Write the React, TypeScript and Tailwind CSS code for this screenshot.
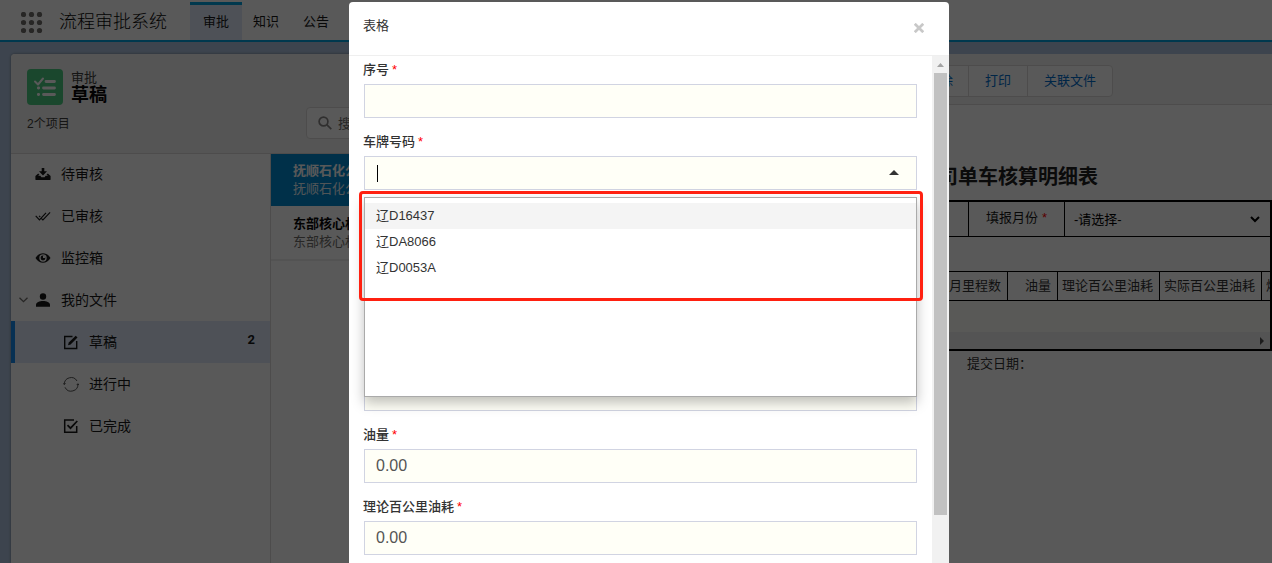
import React from "react";

const DotsIcon = () => (
  <svg width="22" height="22" viewBox="0 0 22 22" fill="#706e6b">
    {[3, 11, 19].map((y) => [3, 11, 19].map((x) => <circle key={`${x}-${y}`} cx={x - 0.5} cy={y - 0.5} r="2.6" />))}
  </svg>
);

const ListCheckIcon = () => (
  <svg width="36" height="36" viewBox="0 0 36 36" fill="none" stroke="#fff" strokeLinecap="round" strokeLinejoin="round">
    <path d="M8 12.5l3 3 5-6" strokeWidth="2" />
    <path d="M19 12.5h8.500M16.500 19h11M16.500 25.500h11" strokeWidth="2.800" />
    <path d="M11.300 19h.4M11.300 25.500h.4" strokeWidth="2.800" />
  </svg>
);

const DownloadIcon = () => (
  <svg width="16" height="16" viewBox="0 0 16 16" fill="#181818">
    <path d="M6.700 2h2.600v3.200h2.700L8 9.400 4 5.200h2.700z" />
    <path d="M3.200 7.500L4.500 8.700 2.900 9.700h2.500l1 1.600h3.200l1-1.600h2.500l-1.600-1 1.300-1.200L15.600 10v3.200q0 .9-.9.9H1.300q-.9 0-.9-.9V10z" />
  </svg>
);

const DoubleCheckIcon = () => (
  <svg width="18" height="16" viewBox="0 0 18 16" fill="none" stroke="#181818" strokeWidth="1.300">
    <path d="M.8 7.800l4.200 4.700 7.400-8" />
    <path d="M7 10.600l1.900 1.900L17 4" />
    <path d="M4.600 7.800l1.300 1.300" />
  </svg>
);

const EyeIcon = () => (
  <svg width="16" height="16" viewBox="0 0 16 16">
    <path d="M.5 8C2.300 4.900 5 3.300 8 3.300S13.700 4.900 15.500 8C13.700 11.100 11 12.700 8 12.700S2.300 11.100.5 8z" fill="#181818" />
    <circle cx="8" cy="8" r="3.700" fill="#fff" />
    <circle cx="8" cy="8" r="2.400" fill="#181818" />
    <path d="M8 8V5.600A2.400 2.400 0 0 1 10.400 8z" fill="#fff" />
  </svg>
);

const UserIcon = () => (
  <svg width="16" height="16" viewBox="0 0 16 16" fill="#181818">
    <circle cx="8" cy="4.500" r="3.200" />
    <path d="M1 14.800v-2.200C1 10.600 4.600 9 8 9s7 1.600 7 3.600v2.200z" />
  </svg>
);

const EditIcon = () => (
  <svg width="16" height="16" viewBox="0 0 16 16" fill="none" stroke="#181818">
    <path d="M9.500 2.500H1.700v12h12V7" strokeWidth="1.400" />
    <path d="M5 11.200l.8-2.600L12.700 1.700l1.800 1.800L7.600 10.400z" fill="#181818" stroke="none" />
  </svg>
);

const ProgressIcon = () => (
  <svg width="16" height="16" viewBox="0 0 16 16" fill="none" stroke="#444" strokeWidth=".9">
    <path d="M1.300 8.500A6.800 6.800 0 0 1 14 5" />
    <path d="M14.900 7.800A6.800 6.800 0 0 1 2 11.300" />
    <path d="M.2 7.300l1.100 1.200 1.200-1.200M13.700 9l1.200-1.200L16 9" />
  </svg>
);

const DoneIcon = () => (
  <svg width="16" height="16" viewBox="0 0 16 16" fill="none" stroke="#181818">
    <path d="M11 1.900H1.700v12.300h12V8" strokeWidth="1.500" />
    <path d="M4.500 7.200l3 3 6.800-7.200" strokeWidth="1.700" />
  </svg>
);

const NavItem = ({ icon, label, arrow }: { icon: React.ReactNode; label: string; arrow?: boolean }) => (
  <div className="flex h-[42px] items-center text-sm text-[#181818]">
    <div className="flex w-6 shrink-0 justify-center">
      {arrow && (
        <svg width="9" height="6" viewBox="0 0 9 6" fill="none" stroke="#706e6b" strokeWidth="1.300">
          <path d="M.5 .7l4 4 4-4" />
        </svg>
      )}
    </div>
    <div className="mr-[10px] flex w-4 shrink-0 justify-center">{icon}</div>
    {label}
  </div>
);

const SubItem = ({ icon, label, count }: { icon: React.ReactNode; label: string; count?: string }) => (
  <div
    className={
      count
        ? "flex h-[42px] items-center border-l-4 border-[#1589ee] bg-[#dee8f8] pl-12 text-sm text-[#181818]"
        : "flex h-[42px] items-center border-l-4 border-transparent pl-12 text-sm text-[#181818]"
    }
  >
    <div className="mr-[10px] w-4 shrink-0">{icon}</div>
    <span className="grow">{label}</span>
    {count && <span className="mr-[15px] pb-1 font-[Roboto,sans-serif] text-[13px] font-bold">{count}</span>}
  </div>
);

const Label = ({ text }: { text: string }) => (
  <div className="-ml-px flex h-[26px] items-center pb-[3px] text-[13px] font-medium text-[#333]">
    {text}
    <span className="ml-[3px] font-normal text-[#ff0000]">*</span>
  </div>
);

const Field = ({ label, value }: { label: string; value?: string }) => (
  <div className="mb-[12px]">
    <Label text={label} />
    <div className="flex h-[34px] items-center border border-[#d1d4e2] bg-[#fffff7] pl-[11px] text-base text-[#555]">
      {value}
    </div>
  </div>
);

const plates = ["辽D16437", "辽DA8066", "辽D0053A"];

function Header() {
  return (
    <div className="flex h-[42px] shrink-0 border-b-2 border-[#00a1e0] bg-white text-[13px] text-[#181818]">
      <div className="ml-[21px] mt-[12px] h-[22px] w-[22px]">
        <DotsIcon />
      </div>
      <div className="ml-4 flex w-[131px] items-center pt-[3px] text-lg font-light text-[#080707]">流程审批系统</div>
      <div className="mt-[2px] flex w-[52px] items-center justify-center border-t-[3px] border-[#00a1e0] bg-[#dee8f8] pb-px">审批</div>
      <div className="flex w-12 items-center justify-center pt-[3px]">知识</div>
      <div className="flex w-[52px] items-center justify-center pt-[3px]">公告</div>
    </div>
  );
}

function LeftCard() {
  return (
    <div className="flex w-[500px] shrink-0 flex-col rounded-tl bg-white shadow-[0_0_3px_rgba(0,0,0,0.4)]">
      <div className="h-[100px] shrink-0 rounded-tl border-b border-[#dddbda] bg-[#f3f2f2] pl-4 pt-[15px]">
        <div className="flex">
          <div className="h-9 w-9 rounded bg-[#4bca81]">
            <ListCheckIcon />
          </div>
          <div className="ml-2">
            <div className="h-4 text-[13px] leading-[17px] text-[#3e3e3c]">审批</div>
            <div className="text-lg font-bold leading-[21px] text-[#080707]">草稿</div>
          </div>
        </div>
        <div className="flex">
          <div className="mt-[7px] w-[279px] text-xs leading-[22px] text-[#3e3e3c]">2个项目</div>
          <div className="mt-px flex h-8 w-[180px] items-center rounded border border-[#dddbda] bg-white pl-[11px] text-[13px] text-[#706e6b]">
            <svg width="14" height="14" viewBox="0 0 14 14" fill="none" stroke="#8a8886" strokeWidth="1.700">
              <circle cx="5.500" cy="5.500" r="4.400" />
              <path d="M8.700 8.700l4.600 4.400" />
            </svg>
            <span className="ml-[6px] pt-px">搜索此列表</span>
          </div>
        </div>
      </div>
      <div className="flex grow">
        <div className="-mt-px w-[260px] shrink-0 border-r border-[#dddbda]">
          <NavItem icon={<DownloadIcon />} label="待审核" />
          <NavItem icon={<DoubleCheckIcon />} label="已审核" />
          <NavItem icon={<EyeIcon />} label="监控箱" />
          <NavItem icon={<UserIcon />} label="我的文件" arrow />
          <SubItem icon={<EditIcon />} label="草稿" count="2" />
          <SubItem icon={<ProgressIcon />} label="进行中" />
          <SubItem icon={<DoneIcon />} label="已完成" />
        </div>
        <div className="grow text-[13px] leading-[18px]">
          <div className="h-[52px] bg-[#008ad2] pl-[22px] pt-[8px] text-white">
            <div className="font-bold">抚顺石化公司</div>
            <div className="opacity-90">抚顺石化公司</div>
          </div>
          <div className="h-[55px] border-b-2 border-[#eeeeee] pl-[22px] pt-[9px]">
            <div className="font-bold text-[#080707]">东部核心机房</div>
            <div className="text-[#706e6b]">东部核心机房</div>
          </div>
        </div>
      </div>
    </div>
  );
}

function RightCard() {
  return (
    <div className="flex grow flex-col overflow-hidden bg-white text-[13px] text-[#181818]">
      <div className="flex h-[51px] shrink-0 justify-end border-b border-[#dddbda] bg-[#f3f2f2] pr-[159px] pt-[11px]">
        <div className="flex h-8 rounded border border-[#dddbda] bg-white leading-[29px] text-[#006dcc]">
          <div className="border-r border-[#dddbda] px-[15px]">删除</div>
          <div className="w-[59px] border-r border-[#dddbda] text-center">打印</div>
          <div className="w-[84px] text-center">关联文件</div>
        </div>
      </div>
      <div className="flex h-[95px] shrink-0 items-end justify-end pb-[7px] pr-[174px] text-xl font-bold leading-[32px] text-[#222]">
        公司单车核算明细表
      </div>
      <div className="flex h-[151px] shrink-0 flex-col border-2 border-black">
        <div className="flex h-[35px] shrink-0 justify-end border-b border-black">
          <div className="flex w-[97px] shrink-0 items-center border-x border-black pb-[2px] pl-[17px]">
            填报月份<span className="ml-1 text-[#ff0000]">*</span>
          </div>
          <div className="flex w-[205px] shrink-0 items-center pl-[9px] text-black">
            <span className="grow pt-px">-请选择-</span>
            <svg className="mr-[10px]" width="10" height="7" viewBox="0 0 10 7" fill="none" stroke="#000" strokeWidth="2">
              <path d="M1 1l4 4 4-4" />
            </svg>
          </div>
        </div>
        <div className="h-[34px] shrink-0" />
        <div className="flex h-[30px] shrink-0 justify-end border-y border-black leading-[27px] text-[#333]">
          <div className="whitespace-nowrap border-r border-black pr-[6px]">月里程数</div>
          <div className="w-[50px] shrink-0 border-r border-black pr-[6px] text-right">油量</div>
          <div className="w-[102px] shrink-0 border-r border-black pl-[4px]">理论百公里油耗</div>
          <div className="w-[102px] shrink-0 border-r border-black pl-[4px]">实际百公里油耗</div>
          <div className="w-[8px] shrink-0 overflow-hidden pl-[4px]">燃</div>
        </div>
        <div className="h-[31px] shrink-0 bg-[#fffffa]" />
        <div className="flex grow items-center justify-end bg-[#f1f1f1] pr-[6px]">
          <svg width="4" height="8" viewBox="0 0 4 8" fill="#505050">
            <path d="M0 0l4 4-4 4z" />
          </svg>
        </div>
      </div>
      <div className="flex justify-end pr-[242px] pt-[3px] leading-5 text-[#333]">
        <span className="w-[63px] whitespace-nowrap">提交日期：</span>
      </div>
    </div>
  );
}

function Modal() {
  return (
    <div className="mt-[2px] flex h-[600px] w-[600px] flex-col rounded bg-white">
      <div className="flex h-[54px] shrink-0 items-center justify-between border-b border-[#efefef] pl-[14px] pr-[25px] text-[13px] text-[#333]">
        <span className="pb-[6px]">表格</span>
        <svg className="-mt-[2px]" width="10" height="10" viewBox="0 0 10 10" stroke="#c8c8c8" strokeWidth="2.700" fill="none">
          <path d="M.8 .8l8.400 8.400M9.200 .8L.8 9.200" />
        </svg>
      </div>
      <div className="flex min-h-0 grow overflow-hidden">
        <div className="grow px-[15px] pt-[2px]">
          <Field label="序号" />
          <div className="relative mb-[187px]">
            <Label text="车牌号码" />
            <div className="flex h-[34px] items-center justify-between border border-[#d1d4e2] bg-[#fffff7] pl-3 pr-[17px]">
              <div className="h-[17px] w-px bg-black" />
              <svg className="-translate-y-px" width="10" height="5" viewBox="0 0 10 5" fill="#333">
                <path d="M0 5l5-5 5 5z" />
              </svg>
            </div>
            <div className="absolute left-0 top-[67px] z-10 h-[200px] w-full border border-[#aaa] bg-white pt-[5px] text-[13px] leading-[26px] text-[#333] shadow-[0_6px_12px_rgba(0,0,0,0.25)]">
              {plates.map((p, i) => (
                <div key={p} className={i === 0 ? "h-[26px] bg-[#f4f4f4] pl-[11px]" : "h-[26px] pl-[11px]"}>
                  {p}
                </div>
              ))}
            </div>
            <div className="absolute -left-[5px] top-[61px] z-20 h-[110px] w-[564px] rounded border-[3px] border-[#ff2010]" />
          </div>
          <div className="mb-[12px] h-[34px] border border-[#d1d4e2] bg-[#fffff7]" />
          <Field label="油量" value="0.00" />
          <Field label="理论百公里油耗" value="0.00" />
        </div>
        <div className="flex w-[17px] shrink-0 flex-col items-center bg-[#f1f1f1]">
          <svg className="mt-[7px] mb-[6px]" width="7" height="4" viewBox="0 0 7 4" fill="#a3a3a3">
            <path d="M0 4l3.500-4L7 4z" />
          </svg>
          <div className="h-[442px] w-[13px] shrink-0 bg-[#c1c1c1]" />
        </div>
      </div>
    </div>
  );
}

export default function App() {
  return (
    <div className="relative h-[563px] w-[1272px] overflow-hidden bg-[#b0c4df] font-['Liberation_Sans','Noto_Sans_CJK_SC',sans-serif]">
      <div className="flex h-full flex-col">
        <Header />
        <div className="flex grow pl-[11px] pt-3">
          <LeftCard />
          <div className="w-3 shrink-0" />
          <RightCard />
        </div>
      </div>
      <div className="absolute inset-0 flex justify-center bg-black/65 pl-[26px]">
        <Modal />
      </div>
    </div>
  );
}
